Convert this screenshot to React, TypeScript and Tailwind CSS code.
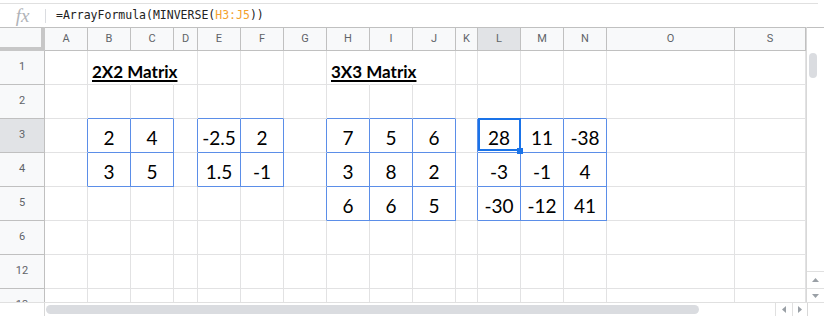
import React from "react";

const COLS = ["A", "B", "C", "D", "E", "F", "G", "H", "I", "J", "K", "L", "M", "N", "O", "S"];
const ROWS = [1, 2, 3, 4, 5, 6, 12, 13];

const MATRICES = [
  { rows: [3, 4], cols: [1, 2] },
  { rows: [3, 4], cols: [4, 5] },
  { rows: [3, 4, 5], cols: [7, 8, 9] },
  { rows: [3, 4, 5], cols: [11, 12, 13] },
];

const VALUES: Record<string, string> = {
  "3-1": "2", "3-2": "4", "3-4": "-2.5", "3-5": "2",
  "3-7": "7", "3-8": "5", "3-9": "6", "3-11": "28", "3-12": "11", "3-13": "-38",
  "4-1": "3", "4-2": "5", "4-4": "1.5", "4-5": "-1",
  "4-7": "3", "4-8": "8", "4-9": "2", "4-11": "-3", "4-12": "-1", "4-13": "4",
  "5-7": "6", "5-8": "6", "5-9": "5", "5-11": "-30", "5-12": "-12", "5-13": "41",
};

const inM = (r: number | undefined, c: number) =>
  r !== undefined && MATRICES.some((m) => m.rows.includes(r) && m.cols.includes(c));

function Cell({ r, ri, c }: { r: number; ri: number; c: number }) {
  const next = ROWS[ri + 1];
  const rightBlue = inM(r, c) || inM(r, c + 1);
  const bottomBlue = inM(r, c) || inM(next, c);
  const hideRight = r === 1 && (c === 1 || c === 2 || c === 7 || c === 8);
  const rightCls = rightBlue
    ? "border-r-[#5b8ee8]"
    : hideRight
    ? "border-r-transparent"
    : "border-r-[#e2e2e3]";
  const bottomCls = bottomBlue ? "border-b-[#5b8ee8]" : "border-b-[#e2e2e3]";
  const v = VALUES[`${r}-${c}`];
  const selected = r === 3 && c === 11;
  const title = r === 1 && c === 1 ? "2X2 Matrix" : r === 1 && c === 7 ? "3X3 Matrix" : null;

  return (
    <div
      className={`relative h-[34px] border-r border-b ${rightCls} ${bottomCls} ${
        title ? "z-10 flex items-end pl-[4px] pb-[4px]" : "flex items-end justify-center pb-[5px]"
      }`}
    >
      {title && (
        <span className="whitespace-nowrap font-['Lato'] text-[17px] font-bold leading-none text-black underline decoration-[1.5px] underline-offset-[2px]">
          {title}
        </span>
      )}
      {v && <span className="font-['Lato'] text-[19px] leading-none text-black">{v}</span>}
      {selected && (
        <>
          <div className="pointer-events-none absolute -top-px left-0 -right-px bottom-px border-2 border-[#1a73e8]" />
          <div className="absolute -bottom-[2px] -right-[3px] z-20 h-[6px] w-[6px] bg-[#1a73e8]" />
        </>
      )}
    </div>
  );
}

export default function App() {
  return (
    <div className="relative h-[316px] w-[824px] overflow-hidden bg-white font-['Roboto',sans-serif]">
      <div className="h-[3px]" />
      {/* formula bar */}
      <div className="flex h-[24px] w-[818px] items-center border-t border-[#e0e0e0]">
        <div className="flex w-[45px] items-center justify-center">
          <span className="font-['Liberation_Serif',serif] text-[19px] italic leading-none text-[#b0b3b8]">fx</span>
        </div>
        <div className="h-[14px] w-px bg-[#dadce0]" />
        <div className="pl-[10px] font-['DejaVu_Sans_Mono',monospace] text-[11.5px] text-[#222]">
          =ArrayFormula(MINVERSE(<span className="text-[#f4a12e]">H3:J5</span>))
        </div>
      </div>

      <div className="flex h-[275px]">
        {/* grid */}
        <div className="h-[275px] w-[806px] overflow-hidden">
          <div className="grid grid-cols-[45px_43px_43px_43px_24px_43px_43px_43px_43px_43px_43px_22px_43px_43px_43px_128px_71px]">
            {/* header row */}
            <div className="h-[24px] border-t border-r-4 border-b-4 border-[#c7c7c7] border-t-[#c0c0c0] bg-[#f8f9fa]" />
            {COLS.map((col, i) => (
              <div
                key={col}
                className={`flex h-[24px] items-center justify-center border-t border-r border-b border-[#c0c0c0] text-[11px] text-[#5f6368] ${
                  i === 11 ? "bg-[#e1e3e6]" : "bg-[#f8f9fa]"
                }`}
              >
                {col}
              </div>
            ))}
            {ROWS.map((r, ri) => (
              <React.Fragment key={r}>
                <div
                  className={`flex h-[34px] items-center justify-center border-r border-b border-[#c0c0c0] text-[11px] text-[#5f6368] ${
                    r === 3 ? "bg-[#e1e3e6]" : "bg-[#f8f9fa]"
                  }`}
                >
                  {r}
                </div>
                {COLS.map((_, c) => (
                  <Cell key={c} r={r} ri={ri} c={c} />
                ))}
              </React.Fragment>
            ))}
          </div>
        </div>
        {/* vertical scrollbar */}
        <div className="flex w-[18px] flex-col border-l border-[#d8d8d8]">
          <div className="h-[24px] border-t border-[#c0c0c0]" />
          <div className="flex-1 pl-[2px] pt-[2px]">
            <div className="h-[25px] w-[8px] rounded-full bg-[#dadce0]" />
          </div>
          <div className="flex h-[17px] items-center justify-center border-t border-[#e0e0e0]">
            <svg width="7" height="4" viewBox="0 0 7 4">
              <polygon points="0,4 3.5,0 7,4" fill="#9aa0a6" />
            </svg>
          </div>
          <div className="flex h-[14px] items-center justify-center border-t border-[#e0e0e0]">
            <svg width="7" height="4" viewBox="0 0 7 4">
              <polygon points="0,0 3.5,4 7,0" fill="#9aa0a6" />
            </svg>
          </div>
        </div>
      </div>

      {/* horizontal scrollbar */}
      <div className="flex h-[14px] border-t border-[#e0e0e0]">
        <div className="w-[45px] border-r border-[#d8d8d8]" />
        <div className="flex w-[730px] items-center pl-[1px]">
          <div className="h-[9px] w-[653px] rounded-full bg-[#dadce0]" />
        </div>
        <div className="flex w-[17px] items-center justify-center border-l border-[#e0e0e0]">
          <svg width="4" height="7" viewBox="0 0 4 7">
            <polygon points="4,0 0,3.5 4,7" fill="#9aa0a6" />
          </svg>
        </div>
        <div className="flex w-[15px] items-center justify-center border-l border-[#e0e0e0]">
          <svg width="4" height="7" viewBox="0 0 4 7">
            <polygon points="0,0 4,3.5 0,7" fill="#9aa0a6" />
          </svg>
        </div>
        <div className="flex-1 border-l border-[#d8d8d8]" />
      </div>
    </div>
  );
}
